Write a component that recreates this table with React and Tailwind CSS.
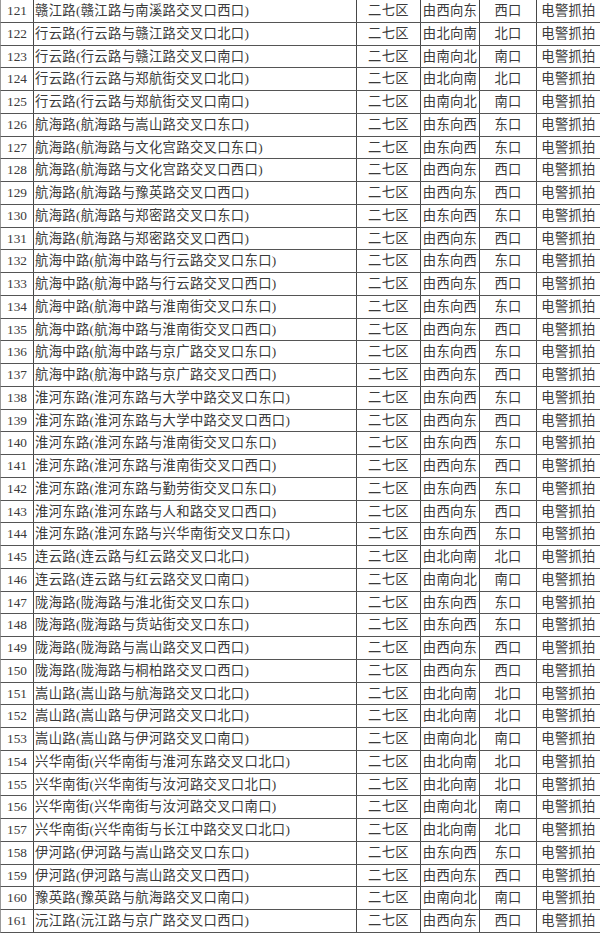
const ROWS = [
  ['121', '赣江路(赣江路与南溪路交叉口西口)', '由西向东', '西口'],
  ['122', '行云路(行云路与赣江路交叉口北口)', '由北向南', '北口'],
  ['123', '行云路(行云路与赣江路交叉口南口)', '由南向北', '南口'],
  ['124', '行云路(行云路与郑航街交叉口北口)', '由北向南', '北口'],
  ['125', '行云路(行云路与郑航街交叉口南口)', '由南向北', '南口'],
  ['126', '航海路(航海路与嵩山路交叉口东口)', '由东向西', '东口'],
  ['127', '航海路(航海路与文化宫路交叉口东口)', '由东向西', '东口'],
  ['128', '航海路(航海路与文化宫路交叉口西口)', '由西向东', '西口'],
  ['129', '航海路(航海路与豫英路交叉口西口)', '由西向东', '西口'],
  ['130', '航海路(航海路与郑密路交叉口东口)', '由东向西', '东口'],
  ['131', '航海路(航海路与郑密路交叉口西口)', '由西向东', '西口'],
  ['132', '航海中路(航海中路与行云路交叉口东口)', '由东向西', '东口'],
  ['133', '航海中路(航海中路与行云路交叉口西口)', '由西向东', '西口'],
  ['134', '航海中路(航海中路与淮南街交叉口东口)', '由东向西', '东口'],
  ['135', '航海中路(航海中路与淮南街交叉口西口)', '由西向东', '西口'],
  ['136', '航海中路(航海中路与京广路交叉口东口)', '由东向西', '东口'],
  ['137', '航海中路(航海中路与京广路交叉口西口)', '由西向东', '西口'],
  ['138', '淮河东路(淮河东路与大学中路交叉口东口)', '由东向西', '东口'],
  ['139', '淮河东路(淮河东路与大学中路交叉口西口)', '由西向东', '西口'],
  ['140', '淮河东路(淮河东路与淮南街交叉口东口)', '由东向西', '东口'],
  ['141', '淮河东路(淮河东路与淮南街交叉口西口)', '由西向东', '西口'],
  ['142', '淮河东路(淮河东路与勤劳街交叉口东口)', '由东向西', '东口'],
  ['143', '淮河东路(淮河东路与人和路交叉口西口)', '由西向东', '西口'],
  ['144', '淮河东路(淮河东路与兴华南街交叉口东口)', '由东向西', '东口'],
  ['145', '连云路(连云路与红云路交叉口北口)', '由北向南', '北口'],
  ['146', '连云路(连云路与红云路交叉口南口)', '由南向北', '南口'],
  ['147', '陇海路(陇海路与淮北街交叉口东口)', '由东向西', '东口'],
  ['148', '陇海路(陇海路与货站街交叉口东口)', '由东向西', '东口'],
  ['149', '陇海路(陇海路与嵩山路交叉口西口)', '由西向东', '西口'],
  ['150', '陇海路(陇海路与桐柏路交叉口西口)', '由西向东', '西口'],
  ['151', '嵩山路(嵩山路与航海路交叉口北口)', '由北向南', '北口'],
  ['152', '嵩山路(嵩山路与伊河路交叉口北口)', '由北向南', '北口'],
  ['153', '嵩山路(嵩山路与伊河路交叉口南口)', '由南向北', '南口'],
  ['154', '兴华南街(兴华南街与淮河东路交叉口北口)', '由北向南', '北口'],
  ['155', '兴华南街(兴华南街与汝河路交叉口北口)', '由北向南', '北口'],
  ['156', '兴华南街(兴华南街与汝河路交叉口南口)', '由南向北', '南口'],
  ['157', '兴华南街(兴华南街与长江中路交叉口北口)', '由北向南', '北口'],
  ['158', '伊河路(伊河路与嵩山路交叉口东口)', '由东向西', '东口'],
  ['159', '伊河路(伊河路与嵩山路交叉口西口)', '由西向东', '西口'],
  ['160', '豫英路(豫英路与航海路交叉口南口)', '由南向北', '南口'],
  ['161', '沅江路(沅江路与京广路交叉口西口)', '由西向东', '西口'],
];

const cell = "flex items-center border-r border-[#474747] h-full";

function Row({ no, name, dir, exit }) {
  return (
    <div className="grid grid-cols-[33px_323px_64px_59px_57px_64px] h-[22.76px] border-b border-[#555] border-l border-l-[#9a9a9a]">
      <div className={`${cell} justify-center`}>{no}</div>
      <div className={`${cell} pl-[1px] whitespace-nowrap tracking-[0.35px]`}>{name}</div>
      <div className={`${cell} justify-center tracking-[0.3px]`}>二七区</div>
      <div className={`${cell} justify-center tracking-[0.3px]`}>{dir}</div>
      <div className={`${cell} justify-center tracking-[0.3px]`}>{exit}</div>
      <div className={`${cell} justify-center tracking-[0.3px]`}>电警抓拍</div>
    </div>
  );
}

export default function App() {
  return (
    <div className="w-[600px] h-[933px] overflow-hidden bg-white text-[#3a3a3a] text-[13.3px] leading-none font-['Liberation_Serif','Noto_Sans_CJK_SC',serif]">
      {ROWS.map(([no, name, dir, exit]) => (
        <Row key={no} no={no} name={name} dir={dir} exit={exit} />
      ))}
    </div>
  );
}
